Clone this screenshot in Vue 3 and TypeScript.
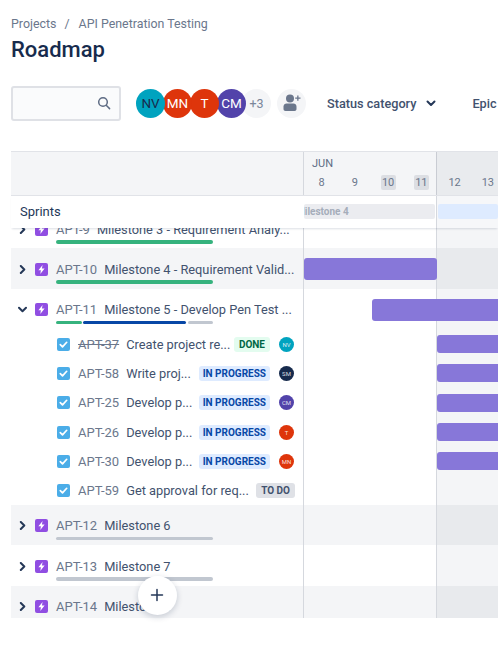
<script setup lang="ts">
interface Segment { color: string; width: number }
interface Child { key: string; title: string; done?: boolean; status: string; tone: string; avatar?: string; avatarColor?: string }
interface Milestone { key: string; title: string; open?: boolean; grey?: boolean; segments: Segment[]; bar?: { left: number; width: number }; children?: Child[] }

const members = [
  { label: 'NV', cls: 'nv' },
  { label: 'MN', cls: 'mn' },
  { label: 'T', cls: 'te' },
  { label: 'CM', cls: 'cm' },
]

const days = [
  { n: 8 }, { n: 9 }, { n: 10, off: true }, { n: 11, off: true }, { n: 12 }, { n: 13 },
]

const grey = '#c1c7d0'
const green = '#36b37e'
const milestones: Milestone[] = [
  { key: 'APT-9', title: 'Milestone 3 - Requirement Analy...', segments: [{ color: green, width: 157 }] },
  { key: 'APT-10', title: 'Milestone 4 - Requirement Valid...', grey: true, segments: [{ color: green, width: 157 }], bar: { left: 0, width: 133 } },
  {
    key: 'APT-11', title: 'Milestone 5 - Develop Pen Test ...', open: true,
    segments: [{ color: green, width: 25.5 }, { color: '#0747a6', width: 103 }, { color: grey, width: 25.5 }],
    bar: { left: 68, width: 140 },
    children: [
      { key: 'APT-37', title: 'Create project re...', done: true, status: 'DONE', tone: 'done', avatar: 'NV', avatarColor: '#00a3bf' },
      { key: 'APT-58', title: 'Write proj...', status: 'IN PROGRESS', tone: 'prog', avatar: 'SM', avatarColor: '#172b4d' },
      { key: 'APT-25', title: 'Develop p...', status: 'IN PROGRESS', tone: 'prog', avatar: 'CM', avatarColor: '#5243aa' },
      { key: 'APT-26', title: 'Develop p...', status: 'IN PROGRESS', tone: 'prog', avatar: 'T', avatarColor: '#de350b' },
      { key: 'APT-30', title: 'Develop p...', status: 'IN PROGRESS', tone: 'prog', avatar: 'MN', avatarColor: '#de350b' },
      { key: 'APT-59', title: 'Get approval for req...', status: 'TO DO', tone: 'todo' },
    ],
  },
  { key: 'APT-12', title: 'Milestone 6', grey: true, segments: [{ color: grey, width: 157 }] },
  { key: 'APT-13', title: 'Milestone 7', segments: [{ color: grey, width: 157 }] },
  { key: 'APT-14', title: 'Milestone 8', grey: true, segments: [{ color: grey, width: 157 }] },
]
</script>

<template>
  <div class="page">
    <nav class="crumbs"><span>Projects</span><span class="sep">/</span><span>API Penetration Testing</span></nav>
    <h1 class="title">Roadmap</h1>

    <div class="toolbar">
      <div class="search">
        <svg width="14" height="14" viewBox="0 0 14 14" fill="none" stroke="#5e6c84" stroke-width="1.5">
          <circle cx="6" cy="6" r="4.3" />
          <path d="M9.2 9.2 12.6 12.6" stroke-linecap="round" />
        </svg>
      </div>
      <div class="avatars">
        <span v-for="m in members" :key="m.label" class="avatar" :class="m.cls">{{ m.label }}</span>
        <span class="avatar more">+3</span>
      </div>
      <button class="add" type="button" aria-label="Add people">
        <svg width="20" height="18" viewBox="0 0 20 18" fill="#6b778c">
          <circle cx="8" cy="4.6" r="4" />
          <path d="M1.5 12.5c0-2 1.5-3 3-3h7c1.5 0 3 1 3 3v2.5c0 1.3-.8 2-2 2h-9c-1.2 0-2-.7-2-2z" />
          <path d="M15.2 1.5h1.3v2h2v1.3h-2v2h-1.300v-2h-2V3.500h2z" />
        </svg>
      </button>
      <button class="filter status" type="button">
        Status category
        <svg width="10" height="7" viewBox="0 0 10 7" fill="none" stroke="#253858" stroke-width="2">
          <path d="M1.5 1.5 5 5l3.5-3.500" stroke-linecap="round" stroke-linejoin="round" />
        </svg>
      </button>
      <button class="filter epic" type="button">Epic</button>
    </div>

    <section class="grid">
      <header class="head">
        <div class="head-left"></div>
        <div class="head-right">
          <div class="month">JUN</div>
          <div class="days">
            <span v-for="d in days" :key="d.n" class="day" :class="{ off: d.off }"><i>{{ d.n }}</i></span>
          </div>
        </div>
      </header>

      <div class="sprints">
        <div class="sprints-left">Sprints</div>
        <div class="sprints-right">
          <div class="sprint-cell"><div class="sprint past"><span>Milestone 4</span></div></div>
          <div class="sprint-cell next"><div class="sprint future"></div></div>
        </div>
      </div>

      <div class="body">
        <div class="scroll">
          <template v-for="m in milestones" :key="m.key">
            <div class="row" :class="{ shaded: m.grey }">
              <div class="left epic-row">
                <div class="line">
                  <svg class="chev" width="9" height="9" viewBox="0 0 9 9" fill="none" stroke="#253858" stroke-width="2" stroke-linecap="round" stroke-linejoin="round">
                    <path v-if="m.open" d="M1 2.8 4.5 6.3 8 2.8" />
                    <path v-else d="M2.8 1 6.3 4.5 2.8 8" />
                  </svg>
                  <svg class="bolt" width="13" height="13" viewBox="0 0 13 13">
                    <rect width="13" height="13" rx="2" fill="#904ee2" />
                    <path d="M7.6 2 3.4 7.300h2.500l-.6 3.700 4.300-5.400H6.900z" fill="#fff" />
                  </svg>
                  <span class="key">{{ m.key }}</span>
                  <span class="name">{{ m.title }}</span>
                </div>
                <div class="progress">
                  <span v-for="(s, i) in m.segments" :key="i" :style="{ width: s.width + 'px', background: s.color }"></span>
                </div>
              </div>
              <div class="track">
                <div class="wk"></div>
                <div class="wk alt"></div>
                <div v-if="m.bar" class="bar" :style="{ left: m.bar.left + 'px', width: m.bar.width + 'px' }"></div>
              </div>
            </div>
            <div v-for="c in m.children" :key="c.key" class="row child">
              <div class="left task-row">
                <svg class="check" width="13" height="13" viewBox="0 0 13 13">
                  <rect width="13" height="13" rx="2" fill="#4bade8" />
                  <path d="M3.3 6.7 5.5 8.900 9.700 4.300" fill="none" stroke="#fff" stroke-width="1.7" stroke-linecap="round" stroke-linejoin="round" />
                </svg>
                <span class="key" :class="{ struck: c.done }">{{ c.key }}</span>
                <span class="name grow">{{ c.title }}</span>
                <span class="lozenge" :class="c.tone">{{ c.status }}</span>
                <span v-if="c.avatar" class="mini" :style="{ background: c.avatarColor }">{{ c.avatar }}</span>
              </div>
              <div class="track">
                <div class="wk"></div>
                <div class="wk alt"></div>
                <div v-if="c.avatar" class="bar small"></div>
              </div>
            </div>
          </template>
        </div>
      </div>

      <button class="fab" type="button" aria-label="Create">
        <svg width="14" height="14" viewBox="0 0 14 14" stroke="#253858" stroke-width="1.5" stroke-linecap="round">
          <path d="M7 1.5v11M1.500 7h11" />
        </svg>
      </button>
    </section>
  </div>
</template>

<style scoped>
.page {
  width: 498px;
  height: 670px;
  overflow: hidden;
  box-sizing: border-box;
  padding: 14px 0 0 11px;
  background: #fff;
  font-family: Roboto, "Noto Sans", sans-serif;
  color: #42526e;
}
.crumbs {
  display: flex;
  height: 18px;
  align-items: center;
  font-size: 12.4px;
  color: #6b778c;
}
.sep { margin: 0 9px 0 8px; }
.title {
  margin: 4px 0 0;
  font-size: 22px;
  line-height: 28px;
  font-weight: 500;
  color: #172b4d;
}
.toolbar {
  display: flex;
  align-items: center;
  height: 34px;
  margin-top: 22px;
}
.toolbar > * { flex: none; }
.search {
  box-sizing: border-box;
  width: 110px;
  height: 35px;
  border: 2px solid #dfe1e6;
  border-radius: 3px;
  background: #fafbfc;
  display: flex;
  align-items: center;
  justify-content: flex-end;
  padding-right: 8px;
}
.avatars { display: flex; margin-left: 15px; }
.avatar {
  box-sizing: border-box;
  flex: none;
  width: 29px;
  height: 29px;
  border-radius: 50%;
  margin-right: -2px;
  display: flex;
  align-items: center;
  justify-content: center;
  font-size: 13.5px;
  color: #fff;
  position: relative;
}
.nv { background: #00a3bf; color: #172b4d; z-index: 4; }
.mn { background: #de350b; z-index: 3; }
.te { background: #de350b; z-index: 2; }
.cm { background: #5243aa; z-index: 1; margin-right: -4px; }
.more { background: #f4f5f7; color: #7a869a; font-size: 12.5px; }
.add {
  width: 29px;
  height: 29px;
  margin-left: 8px;
  border: 0;
  padding: 0;
  border-radius: 50%;
  background: #f4f5f7;
  display: flex;
  align-items: center;
  justify-content: center;
}
.filter {
  border: 0;
  background: none;
  padding: 0;
  font: 500 12.7px Roboto, "Noto Sans", sans-serif;
  color: #42526e;
  display: flex;
  align-items: center;
  white-space: nowrap;
}
.status { margin-left: 21px; gap: 10px; }
.epic { margin-left: 36px; }

.grid {
  position: relative;
  margin-top: 31px;
  width: 487px;
  border-top: 1px solid #e1e3e8;
}
.head { display: flex; height: 43px; }
.head-left {
  box-sizing: border-box;
  width: 293px;
  background: #f4f5f7;
  border-right: 1px solid #d5d8de;
}
.head-right {
  flex: 1;
  min-width: 0;
  background: linear-gradient(to right, #f4f5f7 132px, #c9ccd3 132px, #c9ccd3 133px, #e9ebee 133px);
  overflow: hidden;
}
.month { font-size: 11px; line-height: 14px; padding: 5px 0 0 8px; color: #5e6c84; }
.days { display: flex; margin-top: 4px; padding-left: 1px; }
.day {
  flex: 0 0 33.25px;
  display: flex;
  justify-content: center;
  font-size: 11px;
  color: #6b778c;
}
.day i {
  font-style: normal;
  width: 15px;
  height: 15px;
  line-height: 15px;
  text-align: center;
  border-radius: 2px;
}
.day.off i { background: #dcdee3; }

.sprints {
  position: relative;
  z-index: 2;
  display: flex;
  height: 33px;
  background: #fff;
  box-shadow: 0 2px 2px -1px rgba(9, 30, 66, 0.14);
}
.sprints-left {
  box-sizing: border-box;
  width: 293px;
  padding: 7px 0 0 9px;
  font-size: 13px;
  line-height: 18px;
  color: #253858;
  border-top: 1px solid #e1e3e8;
}
.sprints-right { flex: 1; min-width: 0; display: flex; border-top: 1px solid #e1e3e8; }
.sprint-cell {
  box-sizing: border-box;
  flex: 0 0 133px;
  padding: 8px 1px 0 0;
  border-right: 1px solid #d5d8de;
}
.sprint-cell.next { flex: 1; border: 0; padding: 8px 0 0 1px; background: #f6f7f9; }
.sprint { height: 15px; overflow: hidden; border-radius: 2px; }
.past {
  background: #ebecf0;
  font-size: 10px;
  font-weight: 700;
  line-height: 15px;
  color: #a5adba;
  white-space: nowrap;
}
.past span { display: block; margin-left: -8px; }
.future { background: #deebff; }

.body { height: 390px; overflow: hidden; }
.scroll { margin-top: -20px; }
.row { display: flex; height: 40.33px; }
.row.child { height: 29.33px; }
.left {
  box-sizing: border-box;
  width: 293px;
  flex: none;
  border-right: 1px solid #d5d8de;
  background: #fff;
}
.shaded .left { background: #f4f5f7; }
.epic-row { padding: 12px 0 0 7px; }
.line { display: flex; align-items: center; height: 18px; white-space: nowrap; }
.chev { flex: none; }
.bolt { flex: none; margin: 0 8.5px 0 7.5px; }
.key { font-size: 13px; color: #6b778c; margin-right: 7px; white-space: nowrap; }
.name { font-size: 12.8px; color: #42526e; white-space: nowrap; }
.grow { flex: 1; min-width: 0; overflow: hidden; }
.struck { text-decoration: line-through; }
.progress { display: flex; gap: 1.5px; margin: 2px 0 0 38px; height: 3.5px; }
.progress span { border-radius: 2px; height: 100%; }
.task-row {
  display: flex;
  align-items: center;
  padding: 1px 9px 0 45.5px;
}
.check { flex: none; margin-right: 8.5px; }
.lozenge {
  flex: none;
  height: 15px;
  line-height: 15px;
  padding: 0 4px;
  border-radius: 3px;
  font-size: 10px;
  font-weight: 700;
  white-space: nowrap;
}
.done { background: #e3fcef; color: #006644; padding: 0 5px; }
.prog { background: #deebff; color: #0747a6; }
.todo { background: #dfe1e6; color: #42526e; padding: 0 5px; margin-right: -1px; }
.mini {
  flex: none;
  width: 15px;
  height: 15px;
  margin-left: 9px;
  border-radius: 50%;
  font-size: 6px;
  line-height: 15px;
  text-align: center;
  color: rgba(255, 255, 255, 0.85);
}
.track { position: relative; flex: 1; min-width: 0; display: flex; }
.wk { box-sizing: border-box; flex: 0 0 133px; border-right: 1px solid #d5d8de; background: #fff; }
.wk.alt { flex: 1; border: 0; background: #f4f5f7; }
.shaded .wk { background: #f4f5f7; }
.shaded .wk.alt { background: #e8eaed; }
.bar {
  position: absolute;
  top: 10px;
  height: 22px;
  background: #8777d9;
  border-radius: 3px;
}
.bar.small { top: 6px; left: 133px; width: 80px; height: 18px; }
.fab {
  position: absolute;
  z-index: 3;
  left: 126.5px;
  top: 423.5px;
  width: 39px;
  height: 39px;
  padding: 0;
  border: 0;
  border-radius: 50%;
  background: #fff;
  box-shadow: 0 2px 6px rgba(9, 30, 66, 0.2);
  display: flex;
  align-items: center;
  justify-content: center;
}
</style>
